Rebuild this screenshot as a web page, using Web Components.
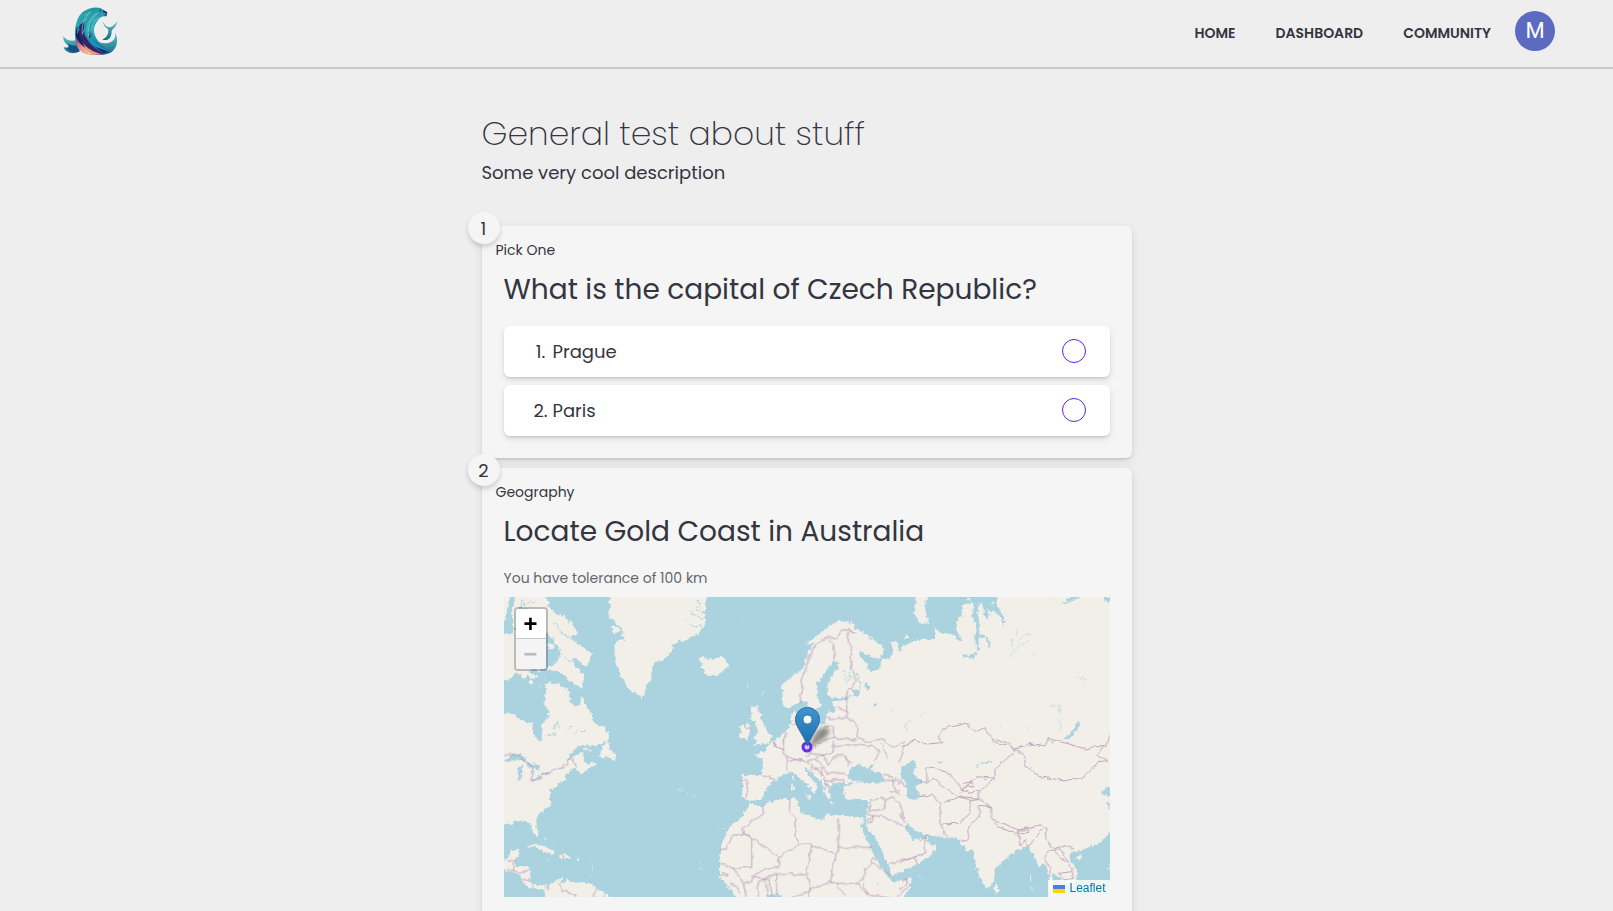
<!DOCTYPE html>
<html lang="en">
<head>
<meta charset="utf-8">
<meta name="viewport" content="width=device-width, initial-scale=1">
<title>General test about stuff</title>
<style>
body { margin: 0; background: #eee; color: #343541; font-family: Poppins, Inter, sans-serif; font-size: 18px; line-height: 28px; }
</style>
</head>
<body>
<quiz-page></quiz-page>

<template id="t-logo">
<style>:host { display: block; width: 55px; height: 48px; } svg { display: block; width: 100%; height: 100%; }</style>
<svg viewBox="69 18 165 144" role="img" aria-label="Sea lion logo">
  <defs>
    <linearGradient id="body" x1="0" y1="0" x2="0" y2="1"><stop offset="0" stop-color="#2591a3"/><stop offset=".45" stop-color="#38b7bf"/><stop offset="1" stop-color="#20568d"/></linearGradient>
    <linearGradient id="fin" x1="0" y1="0" x2="0" y2="1"><stop offset="0" stop-color="#58c5bf"/><stop offset="1" stop-color="#176b8c"/></linearGradient>
    <linearGradient id="warm" x1="0" y1="0" x2=".6" y2="1"><stop offset="0" stop-color="#57418b"/><stop offset=".55" stop-color="#e88b87"/><stop offset="1" stop-color="#ffc48f"/></linearGradient>
  </defs>
  <path d="M70 106C79 118 94 122 108 118L119 151C101 162 76 156 71 138C81 142 88 139 83 132C76 126 69 121 70 106Z" fill="url(#fin)"/>
  <path d="M75 121C84 132 98 136 112 133L119 151C104 156 87 151 78 140C91 145 91 134 75 121Z" fill="#164e85"/>
  <path d="M225 94C234 112 235 136 216 152C198 165 169 162 143 147L152 103C166 126 195 132 214 122C224 117 228 107 225 94Z" fill="url(#fin)"/>
  <path d="M188 60C195 77 204 78 210 79C219 76 228 68 232 59C231 75 219 82 215 89C215 111 205 121 187 116C202 108 207 96 204 84C195 79 189 71 188 60Z" fill="url(#fin)"/>
  <path d="M108 127C100 94 106 52 128 33C146 19 178 14 191 27L201 34L197 47C186 43 177 52 169 65C157 84 161 102 175 121C192 142 207 150 215 151C197 165 171 163 151 160C129 158 113 146 108 127Z" fill="url(#body)"/>
  <path d="M110 77C103 107 108 137 143 159L155 160C130 133 118 107 125 70C119 73 114 80 110 77Z" fill="#191e64"/>
  <path d="M119 72C112 114 132 147 164 160L190 159C149 133 127 109 134 61Z" fill="#302568"/>
  <path d="M108 106C117 133 140 143 165 161C133 162 112 148 108 127Z" fill="url(#warm)"/>
  <path d="M130 125C138 143 166 154 187 160L164 162C145 153 131 140 130 125Z" fill="#f09480"/>
  <path d="M145 91C146 120 165 139 190 156L204 154C174 137 160 119 153 94Z" fill="#17266f"/>
  <path d="M157 98C161 125 180 141 212 151C190 146 158 141 146 118Z" fill="#1895b7"/>
  <path d="M113 97C112 71 124 46 151 33C133 52 124 71 127 100C136 74 151 48 173 36C148 59 142 83 146 105C151 69 163 55 178 50" fill="none" stroke="#7ad3c9" stroke-width="2"/>
  <path d="M132 46C118 59 114 73 116 90M150 49C136 66 133 83 136 106M158 61C147 76 148 97 157 112" fill="none" stroke="#2295a5" stroke-width="4"/>
  <path d="M190 28L202 34L199 46L193 43L200 37L189 34Z" fill="#102e61"/><circle cx="181" cy="29" r="2" fill="#102e61"/>
</svg>
</template>

<template id="t-header">
<style>
:host { display: block; border-bottom: 2px solid #c8c8c8; }
header { display: flex; align-items: center; justify-content: space-between; height: 67px; padding: 0 58px 0 63px; box-sizing: border-box; }
.logo { margin-bottom: 6px; }
.right { display: flex; align-items: center; gap: 24px; margin-bottom: 2px; }
nav { display: flex; gap: 40px; }
a { color: inherit; text-decoration: none; font-size: 14px; line-height: 20px; font-weight: 600; }
button { width: 40px; height: 40px; margin: 0 0 4px; padding: 0; border: 0; border-radius: 50%; background: #5c6bc0; color: #fff; font: 22px/40px Roboto, sans-serif; }
</style>
<header>
  <quiz-logo class="logo"></quiz-logo>
  <div class="right">
    <nav><a href="#home">HOME</a><a href="#dashboard">DASHBOARD</a><a href="#community">COMMUNITY</a></nav>
    <button type="button" title="Account">M</button>
  </div>
</header>
</template>

<template id="t-card">
<style>
:host { display: block; position: relative; padding: 12px 22px 22px; background: #f5f5f5; border-radius: 6px; box-shadow: 0 3px 10px rgba(0,0,0,.1), 0 2px 3px -1px rgba(0,0,0,.14); }
.badge { position: absolute; left: -14px; top: -14px; width: 32px; height: 32px; border-radius: 50%; background: #f5f5f5; box-shadow: 0 3px 5px rgba(0,0,0,.16); text-align: center; line-height: 34px; }
.kind { margin: 0 0 0 -8px; font-size: 14px; line-height: 24px; }
h2 { margin: 7px 0 15px; font-size: 28px; line-height: 42px; font-weight: 400; }
</style>
<div class="badge"><slot name="number"></slot></div>
<p class="kind"><slot name="kind"></slot></p>
<h2><slot name="question"></slot></h2>
<slot></slot>
</template>

<template id="t-choices">
<style>
:host { display: grid; gap: 8px; }
label { display: flex; align-items: center; height: 51px; box-sizing: border-box; padding: 0 24px 0 29px; border-radius: 6px; background: #fff; box-shadow: 0 3px 6px rgba(0,0,0,.1), 0 2px 3px -1px rgba(0,0,0,.14); }
.n { width: 16px; text-align: center; margin-right: 4px; }
.t { flex: 1; }
input { appearance: none; margin: 0 0 2px; width: 24px; height: 24px; border: 1px solid #5b21e6; border-radius: 50%; background: #fff; }
input:checked { box-shadow: inset 0 0 0 5px #fff; background: #5b21e6; }
</style>
<label><span class="n">1.</span><span class="t">Prague</span><input type="radio" name="capital" value="prague"></label>
<label><span class="n">2.</span><span class="t">Paris</span><input type="radio" name="capital" value="paris"></label>
</template>

<template id="t-map">
<style>
:host { display: block; position: relative; height: 300px; overflow: hidden; background: #aad3df; }
.world { display: block; width: 100%; height: 100%; }
.pin { position: absolute; left: calc(50% - 12px); top: 110px; width: 42px; height: 48px; }
.zoom { position: absolute; left: 10px; top: 10px; width: 30px; border: 2px solid rgba(0,0,0,.22); border-radius: 4px; background-clip: padding-box; }
.zoom button { display: block; width: 30px; height: 30px; margin: 0; padding: 0; border: 0; background: #fff; color: #000; font: 700 24px/34px "Liberation Mono", monospace; }
.zoom button:first-child { border-bottom: 1px solid #ccc; border-radius: 2px 2px 0 0; }
.zoom button:last-child { background: #f4f4f4; color: #bbb; border-radius: 0 0 2px 2px; }
.credit { position: absolute; right: 0; bottom: 0; display: flex; align-items: center; gap: 4px; padding: 0 4px 0 5px; height: 17px; background: rgba(255,255,255,.8); color: #0078a8; font: 12px/17px "Liberation Sans", Arial, sans-serif; text-decoration: none; }
.credit svg { width: 12px; height: 8px; }
</style>
<svg class="world" viewBox="0 0 1818 900" preserveAspectRatio="xMidYMid slice" role="img" aria-label="World map">
  <defs>
    <filter id="coast" x="0" y="0" width="1818" height="900" filterUnits="userSpaceOnUse"><feTurbulence type="fractalNoise" baseFrequency=".09" numOctaves="3" seed="4"/><feDisplacementMap in="SourceGraphic" scale="16" xChannelSelector="R" yChannelSelector="G"/></filter>
    <filter id="line" x="0" y="0" width="1818" height="900" filterUnits="userSpaceOnUse"><feTurbulence type="fractalNoise" baseFrequency=".05" numOctaves="2" seed="9"/><feDisplacementMap in="SourceGraphic" scale="14" xChannelSelector="R" yChannelSelector="G"/></filter>
  </defs>
  <g filter="url(#coast)">
  <rect x="-30" y="-30" width="1880" height="960" fill="#aad3df"/>
  <g fill="#f2efe9">
    <path d="M-20-20H24L0 75H-20ZM23 35L36-10H113L138 17L130 27L153 49L178 57L203 79L216 99L218 114L203 117L223 144L250 159L265 171L250 204L243 209L223 189L203 184L228 224L240 234L238 254L235 272L203 254L178 232L138 218L120 214L158 199L170 169L158 144L133 109L60 109L30 90Z"/>
    <path d="M-20 107L25 110L40 80L60 120L100 180L110 225L85 215L60 235L33 230L20 245L-20 255Z"/>
    <path d="M50 232L75 225L105 238L88 246L70 238L52 244ZM73 252L88 250L84 262L76 262ZM108 262L112 262L112 275L107 272ZM118 240L128 240L124 250ZM208 243L230 262L222 266ZM130 140L145 137L150 155L136 162Z"/>
    <path d="M-20 349L28 351L63 374L86 379L86 409L108 434L118 424L111 384L133 364L136 344L120 324L126 279L123 259L168 257L173 269L193 274L196 309L213 329L228 324L233 297L248 329L263 354L268 374L303 389L315 414L313 429L278 445L223 447L203 469L188 489L238 464L238 489L253 504L273 494L278 504L253 514L233 532L223 524L218 514L193 524L183 534L188 549L163 559L158 569L138 579L138 604L143 619L98 659L96 674L105 709L100 722L88 709L78 679L63 672L28 674L23 684L-20 679Z"/>
    <path d="M308 429L283 479L318 481L336 494L338 474L316 459L313 434ZM240 452L262 462L258 466L240 457Z"/>
    <path d="M313-10L318 39L313 59L333 74L353 94L358 129L333 134L331 179L348 229L373 279L398 291L416 304L428 269L443 239L448 199L478 189L503 164L508 139L548 129L588 105L603 85L603 20L613-10ZM322 90L340 86L348 100L330 112Z"/>
    <path d="M583 189L598 180L608 189L658 179L673 204L658 224L628 241L598 229L606 219L583 209L600 201Z"/>
    <path d="M-20 804L13 779L18 759L48 757L43 779L33 784L33 807L73 807L80 819L76 854L88 864L123 864L134 876L138 864L178 841L178 864L188 844L198 854L258 859L278 874L313 895L340 920H128L120 877L85 876L58 860L52 835L28 829L-20 814Z"/>
    <path d="M68 751L93 741L118 747L153 764L148 772L118 764L98 749L73 754ZM166 774L188 774L203 784L178 787L166 782ZM122 785L136 786L134 790L122 788ZM217 785L230 785L228 789L217 788Z"/>
    <path d="M738 329L763 327L757 342L773 349L768 364L783 384L790 405L803 419L793 441L770 440L743 447L763 434L748 427L748 419L763 404L753 374L738 369L743 349ZM708 384L733 377L740 399L728 427L703 424L711 404Z"/>
    <path d="M860 354L873 339L853 334L838 324L833 264L858 244L898 214L913 159L933 139L903 139L928 124L958 104L978 84L1008 71L1048 79L1053 94L1088 114L1133 144L1141 169L1123 187L1088 174L1068 159L1066 174L1088 199L1098 224L1128 214L1133 189L1163 179L1168 159L1158 134L1183 134L1188 165L1198 144L1238 129L1293 129L1293 99L1288 87L1308 104L1348 114L1376 137L1360 104L1360 69L1373 49L1378 21L1408 19L1404 60L1417 85L1410 125L1420 160L1403 175L1380 172L1378 182L1410 182L1425 155L1423 125L1445 120L1455 152L1460 150L1455 128L1440 115L1424 113L1430 80L1420 50L1425 15L1438 25L1440 55L1455 68L1450 35L1470 45L1485 50L1500 95L1500 60L1478 20L1480-20H1840V704H1818L1793 734L1748 754L1713 764L1693 774L1698 794L1718 814L1720 839L1703 869L1688 859L1668 839L1643 829L1650 870L1660 920H1645L1636 844L1628 809L1618 799L1603 809L1593 779L1573 749L1538 759L1513 779L1473 814L1470 854L1450 876L1428 844L1410 779L1408 759L1388 764L1373 739L1358 721L1318 722L1268 714L1228 699L1208 674L1201 692L1228 729L1263 724L1268 720L1275 738L1298 749L1278 779L1238 804L1188 827L1163 836L1156 809L1136 766L1113 720L1088 691L1085 669L1093 619L1088 609L1058 609L1023 604L1018 569L1058 559L1023 559L988 559L973 579L983 609L963 594L953 554L918 524L903 511L903 524L928 549L940 569L932 590L923 580L893 549L873 529L868 524L838 534L813 549L788 574L773 609L738 611L713 601L718 549L713 534L773 534L778 489L748 471L778 464L793 444L843 404L863 379Z"/>
    <path d="M738 619L773 629L798 612L873 604L883 614L888 644L953 671L963 654L998 654L1078 664L1080 682L1068 680L1092 740L1112 780L1128 805L1153 840L1166 855L1188 852L1223 840L1226 849L1213 879L1190 920H843L828 891L788 895V920H713L668 864L648 839L648 754L673 694L713 659Z"/>
    <path d="M903 594H923L920 607ZM863 554L871 579L860 581ZM864 535H870L868 549H865ZM971 615L990 619L985 622ZM1068 626L1080 624L1074 630ZM1238-10H1273L1263 29L1268 64L1280 81L1248 77L1230 49ZM1201 116L1211 110L1217 121L1208 127L1200 124ZM1476 859L1486 879L1476 894L1470 879ZM1718 779L1736 770L1730 786L1720 785ZM1385 8L1395-2L1400 12ZM1462 16L1468 18L1464 23ZM1814 805H1830V820H1814Z"/>
    <path d="M900 359L918 354L908 370ZM890 375L900 376L895 385ZM712 70L721 66L717 73ZM727 260L732 261L730 275ZM775 288L780 290L777 300Z"/>
  </g>
  <g fill="#aad3df">
    <path d="M0 494L28 469L63 479L68 494L48 489L18 494ZM43 509L58 501L50 549L40 549ZM63 501L78 499L103 504L106 519L93 514L88 534L80 514ZM80 551L108 537L113 544L86 556ZM113 529L138 524L136 532L116 534Z"/>
    <path d="M983 194L1003 194L1003 214L978 244L970 269L973 294L988 304L1028 299L1050 297L1018 309L983 314L997 340L988 349L973 340L968 354L963 379L918 389L878 384L898 359L928 349L950 324L938 289L938 259L958 234L973 214ZM848 336L888 314L913 314L898 349L888 369L876 344L858 356Z"/>
    <path d="M1028 544L1043 509L1068 504L1088 514L1116 496L1098 519L1138 534L1143 554L1108 559L1058 554ZM1193 509L1233 489L1238 509L1223 529L1253 554L1233 569L1250 599L1233 609L1208 599L1210 569L1190 535Z"/>
    <path d="M1725 369L1726 389L1698 424L1675 431L1703 404ZM1793 584L1818 568V600L1800 595ZM1808 615L1818 612V636ZM1418 502L1463 493V497L1425 501L1420 511ZM1045 275L1068 280L1066 298L1048 296ZM1080 252L1096 268L1094 282L1082 268ZM1106 322L1120 320L1116 332ZM900 316L908 312L905 325Z"/>
    <path d="M1675 20L1700 0H1730L1705 13ZM1800 0H1818V15L1804 12ZM1433 0H1470L1455 20L1438 15ZM1300 494H1314L1308 502ZM1255 550L1242 552L1250 562ZM1436 548L1456 542L1446 550ZM58 28L70 15H100L60 20ZM130 165L155 160L168 175L150 198L132 190ZM1118 855L1123 858L1120 866ZM1575 445L1585 443L1583 453ZM1635 5L1643 7L1637 12ZM1640 430L1650 432L1645 443Z"/>
  </g>
  <g fill="none" stroke="#aad3df" stroke-width="3">
    <path d="M603 45L575 35L590 20L575 5M603 85L570 90L545 70M603 65L580 60L560 45M28 10L20 60M55 8L48 30L70 38M150 75L175 110L210 130M180 180L205 195L225 215M125 415L155 410M150 395L160 375L165 395M190 395L205 385M230 405L245 400M210 408L230 395M1070 280L1060 225M1020 220L1030 260M1038 205V250M1134 440L1150 485M968 560L990 585M975 555L1000 565M985 590L1000 598M1428 110L1455 125"/>
    <path opacity=".75" stroke-width="2" d="M1535 165L1545 145L1575 133M1548 130L1565 110L1582 112M1538 115V95M1522 125L1528 165L1522 178M1590 165V178M1635 325L1665 325L1668 350M1655 365L1668 375L1672 403M1720 240L1745 248L1738 262M1210 400L1206 380L1220 372M1240 365L1262 342M1455 15L1447 35L1465 60M1482 395L1497 385M1565 385L1570 395M1160 330L1165 345M1205 385L1215 375M1200 385L1208 400M785 880L790 860"/>
  </g>
  <g fill="#f2efe9" opacity=".8"><path d="M525 577L535 578V580H525ZM546 585H550V588H546ZM568 594H575V596H568ZM580 798H588V801H580ZM586 812H595V815H586ZM638 693H645V696H638ZM656 692H663V695H656ZM119 720L130 727H120ZM145 745H152V748H145ZM170 752H176V755H170ZM255 790H264V793H255ZM263 806H266V815H263ZM260 835H270V838H260ZM1578 830H1581V850H1578ZM1582 870H1585V880H1582ZM1240 837H1252V839H1240Z"/></g>
  </g>
  <g fill="none" stroke="#b794b3" stroke-width="2.500" stroke-linejoin="round" filter="url(#line)">
    <g transform="translate(-12 429)"><path d="M12 43L50 45L75 62L98 80V105L92 122L125 115L127 102L150 98L160 86L190 85L205 60L220 58L228 83M22 362H45L40 392L12 390M40 392L60 400L88 385M70 420L90 425M95 432V445M135 445L145 450M190 345V357M190 412L178 430L185 450L228 466L225 475M290 445L280 465L288 475M313 465V475"/></g>
    <g transform="translate(588 -21)"><path d="M298 340L307 300L303 270L315 240L330 200L345 165L370 152L380 135L412 150L425 120L445 120L465 128M445 120L470 128M380 140L402 165V208M445 125V155L455 170L450 200L458 240L470 270L440 310V380L475 410L470 440L500 455L550 450L580 475L615 455M410 350L438 365M382 385L430 385L440 380M370 410H400V445L350 460M400 445L470 450M272 403H288M258 425L250 455M135 400V412L150 415M220 460L250 480"/></g>
    <g transform="translate(588 429)"><path d="M188 195L190 222L130 262L128 275L238 350L300 312H330L410 342L415 322V235M415 322H515M270 178L268 215L285 235V290L300 312M60 328H78L98 285H128V275M128 275L155 295V382L100 385L75 372H60M238 350L235 380L200 385L160 405L155 425L130 430L100 385M235 400L315 405L322 380L335 315M410 342L395 385V430L410 430H470L490 415L495 385L515 370L560 395L575 410M322 400L330 450L395 425M175 471V425L205 420L220 471M195 425L205 471M230 400V460M330 450L270 475M490 430L500 465L590 475M60 405H85M65 398L85 400M90 430L110 440L120 460M130 430L140 475M160 405L190 420L230 400M410 430L440 475M470 430L500 465M330 450L325 475M515 370L520 355L530 365M590 475L630 430"/>
    <path d="M187 108L225 115M125 118L145 122L138 172M215 5L250 30L258 50L260 75L265 90M258 50L320 65L345 55L370 45L400 35V5M330 40L345 20L330 10M320 65L345 85L375 110V150M345 55L385 100H435M385 75L400 50L430 45L455 70M375 120H430V130M400 20L470 15L520 20L540 35L525 60M550 105L590 115L620 140M580 120L585 150L600 155M510 180L550 175L580 172L600 190L612 235M510 180V215L555 205V175M500 240L540 225L610 258M570 370L610 360L630 355M250 30V0M265 65L285 60L310 60M340 80L330 95M345 85H365V110M370 45L385 75M320 50L330 40L370 45M600 70L605 30L630 10M555 125L580 120L600 130M375 130L390 145M570 160L585 155L600 165M500 220L520 230L510 250L500 240M435 45L445 60V80"/></g>
    <g transform="translate(1188 -21)"><path d="M0 470L15 470L40 448L80 462L125 458L115 445L125 418L205 398L208 410L228 425L255 410L285 458L320 465L345 478L390 460L435 468L445 445L480 455L520 465L560 480L590 470L620 470L630 430"/></g>
    <g transform="translate(1188 429)"><path d="M345 30L330 10L290 0M350 30L375 50V75L420 110L495 123L555 110L595 65L622 62L590 45L610 20M350 30L310 65L285 85V115L240 150L235 175L272 200L275 235L355 270L420 255L440 265V300L465 330L500 315L520 330M80 125V85L105 80L150 105L170 125L185 150L210 130L230 110L285 115M60 120L80 130L100 115L150 155L180 170L235 175M60 170L95 165L120 185V250L140 290M120 190L180 170L210 180V215L180 250L125 252M235 175L210 180M272 200L235 200L240 225L200 270L205 300L185 305M285 245L290 260L350 282L355 270L360 320L375 300L385 320L410 290L430 262M358 270H385V278H360M440 335L435 360L450 380V410M460 330L440 335M460 330L490 360L515 380L520 415L490 420L475 400L515 395M480 320L490 345L505 365M0 370L45 350L75 340V290L60 300M45 350L52 372M190 130L220 125V140H195L180 160M185 150L210 160L235 150M0 120L15 140M0 220L15 250M0 450L20 430V410"/></g>
  </g>
</svg>
<svg class="pin" viewBox="0 0 42 48" aria-hidden="true">
  <defs>
    <linearGradient id="pin" x1="0" y1="0" x2="0" y2="1"><stop offset="0" stop-color="#3f95d1"/><stop offset="1" stop-color="#1b6dae"/></linearGradient>
    <filter id="soft" x="-30%" y="-30%" width="160%" height="160%"><feGaussianBlur stdDeviation="2"/></filter>
  </defs>
  <path d="M13 40L20 27C25 19 35 18 34 25C33 31 21 38 13 40Z" opacity=".42" filter="url(#soft)"/>
  <circle cx="12" cy="40" r="4" fill="#d4c2f1" stroke="#632de9" stroke-width="3"/>
  <path d="M12.500.5C5.800.5.5 5.800.5 12.500C.5 16 2 19 3.500 21.500C7 28 10 32 12.500 39C15 32 18 28 21.500 21.500C23 19 24.500 16 24.500 12.500C24.500 5.800 19.200.5 12.500.5Z" fill="url(#pin)" stroke="#2e6c97"/>
  <circle cx="12.500" cy="12.500" r="4.500" fill="#fff" stroke="#2d78ab"/>
</svg>
<div class="zoom"><button type="button" title="Zoom in">+</button><button type="button" title="Zoom out" disabled>−</button></div>
<a class="credit" href="https://leafletjs.com"><svg viewBox="0 0 12 8" aria-hidden="true"><path fill="#4c7be1" d="M0 0h12v4H0z"/><path fill="#ffd500" d="M0 4h12v4H0z"/></svg><span>Leaflet</span></a>
</template>

<template id="t-page">
<style>
:host { display: block; }
main { max-width: 650px; margin: 0 auto; padding: 43px 16px 48px; }
h1 { margin: 0; font-size: 33px; line-height: 44px; font-weight: 275; }
.lead { margin: 3px 0 39px; }
.cards { display: grid; gap: 10px; }
.hint { margin: 0; padding-bottom: 9px; font-size: 14px; line-height: 20px; color: #65656d; }
</style>
<quiz-header></quiz-header>
<main>
  <h1>General test about stuff</h1>
  <p class="lead">Some very cool description</p>
  <div class="cards">
    <quiz-card><span slot="number">1</span><span slot="kind">Pick One</span><span slot="question">What is the capital of Czech Republic?</span><quiz-choices></quiz-choices></quiz-card>
    <quiz-card><span slot="number">2</span><span slot="kind">Geography</span><span slot="question">Locate Gold Coast in Australia</span><p class="hint">You have tolerance of 100 km</p><quiz-map></quiz-map></quiz-card>
  </div>
</main>
</template>

<script>
for (const name of ['logo', 'header', 'card', 'choices', 'map', 'page']) {
  const template = document.getElementById('t-' + name);
  customElements.define('quiz-' + name, class extends HTMLElement {
    constructor() {
      super();
      this.attachShadow({ mode: 'open' }).append(template.content.cloneNode(true));
    }
  });
}
</script>
</body>
</html>
